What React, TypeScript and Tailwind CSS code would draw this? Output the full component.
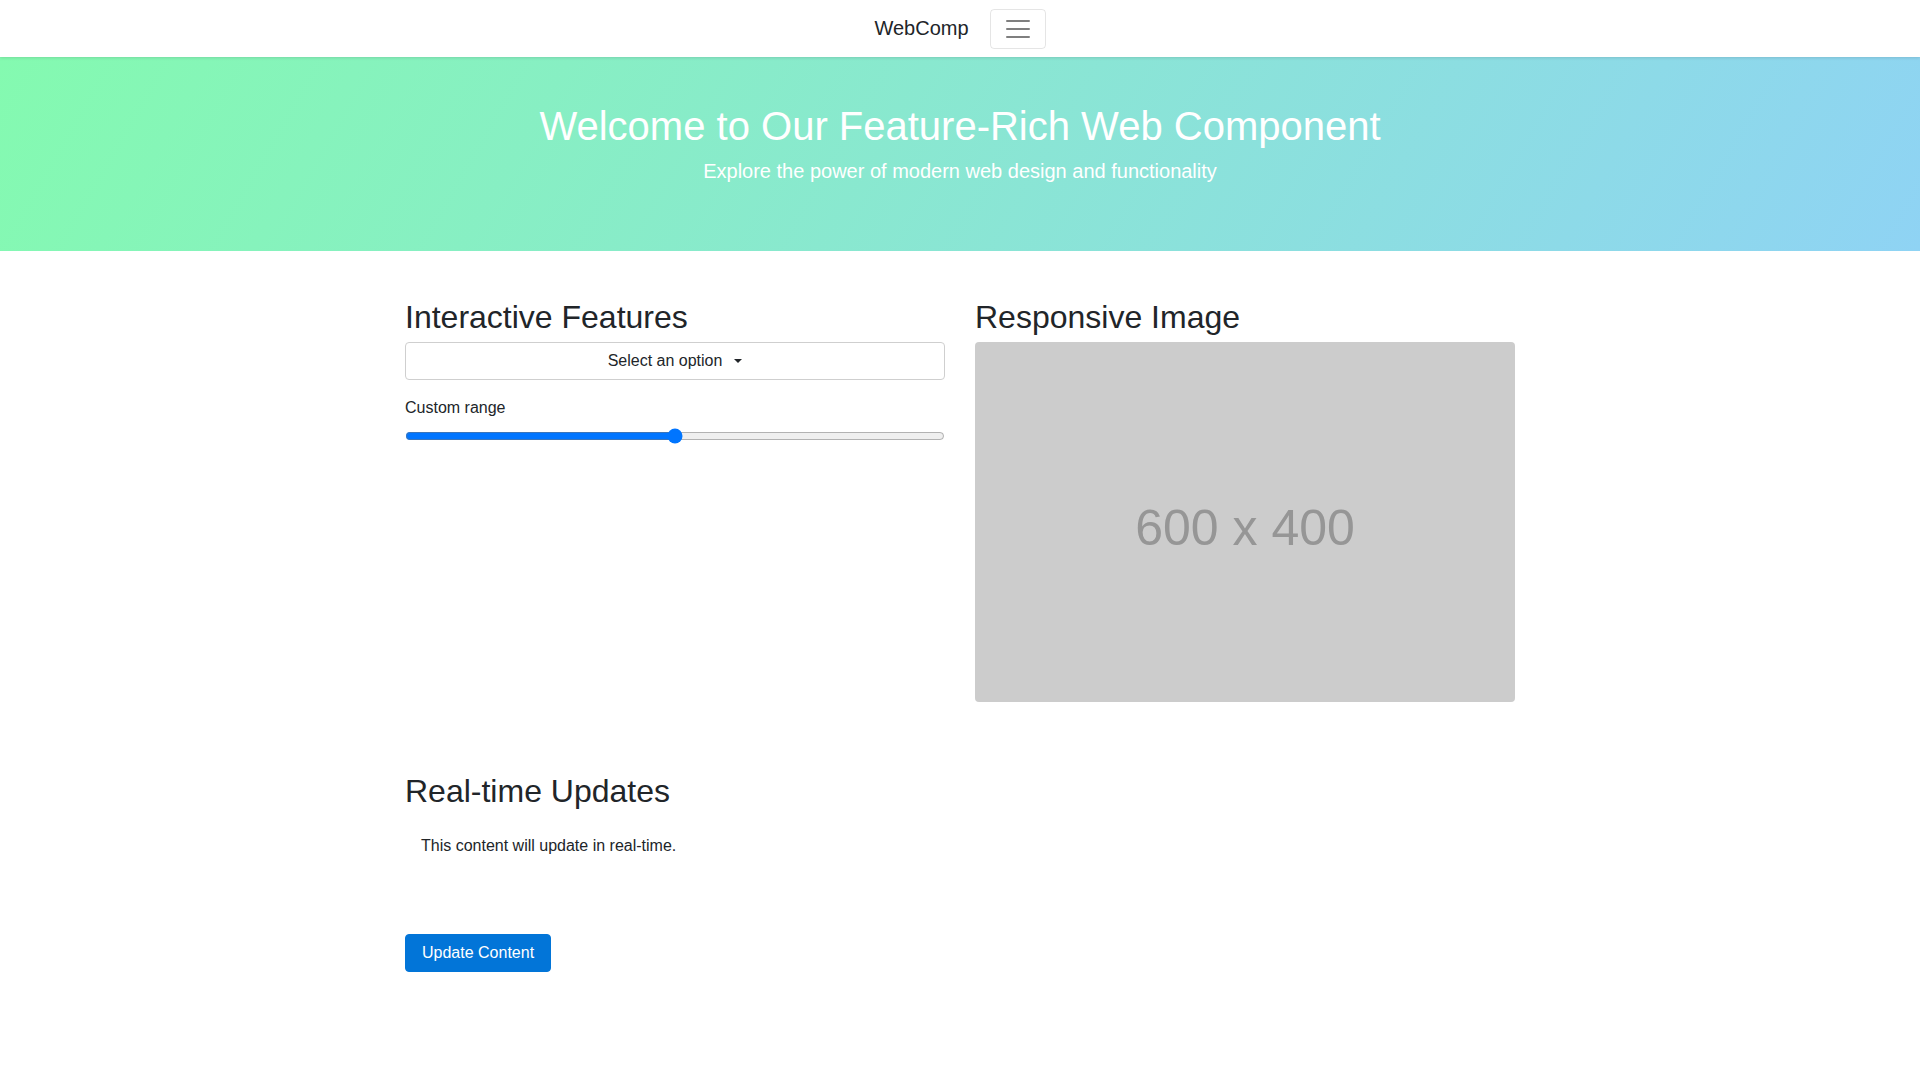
import { useState } from 'react'

const FONT = { fontFamily: '"Liberation Sans", Arial, sans-serif' }

function Navbar() {
  return (
    <nav className="relative z-10 flex h-[57px] items-center justify-center bg-white shadow-[0_1px_3px_rgba(0,0,0,0.12)]">
      <a href="#" className="mb-[2px] mr-[21px] text-[20px] leading-[30px] text-[#212529]">
        WebComp
      </a>
      <button
        type="button"
        aria-label="Toggle navigation"
        className="flex h-[40px] w-[56px] items-center justify-center rounded-[4px] border border-[rgba(0,0,0,0.1)]"
      >
        <svg width="30" height="30" viewBox="0 0 30 30">
          <path d="M4 7h22M4 15h22M4 23h22" stroke="rgba(0,0,0,0.5)" strokeWidth="2" strokeLinecap="round" />
        </svg>
      </button>
    </nav>
  )
}

function Hero() {
  return (
    <header className="bg-[linear-gradient(120deg,#84fab0_0%,#8fd3f4_100%)] pb-[49px] pt-[45px] text-center text-white">
      <h1 className="mb-[6px] text-[40px] leading-[48px]">Welcome to Our Feature-Rich Web Component</h1>
      <p className="mb-4 text-[20px] leading-[30px]">Explore the power of modern web design and functionality</p>
    </header>
  )
}

export default function App() {
  const [value, setValue] = useState(50)
  const [content, setContent] = useState('This content will update in real-time.')

  return (
    <div className="min-h-screen bg-white text-[16px] text-[#212529]" style={FONT}>
      <Navbar />
      <Hero />

      <main className="mx-auto w-[1140px] px-[15px] pt-[47px]">
        <div className="grid grid-cols-2 gap-[30px]">
          <section>
            <h2 className="mb-[6px] text-[32px] leading-[38px]">Interactive Features</h2>
            <button
              type="button"
              className="mb-4 flex h-[38px] w-full items-center justify-center rounded-[4px] border border-[#cfcfcf] bg-white text-[16px] leading-[24px] text-[#212529]"
            >
              Select an option
              <span className="ml-[12px] inline-block h-0 w-0 border-x-[4px] border-t-[4px] border-x-transparent border-t-[#212529]" />
            </button>
            <label htmlFor="range" className="mb-2 block leading-[24px]">
              Custom range
            </label>
            <input
              id="range"
              type="range"
              min={0}
              max={100}
              value={value}
              onChange={(e) => setValue(Number(e.target.value))}
              className="m-0 block h-[16px] w-full"
            />
          </section>

          <section>
            <h2 className="mb-[6px] text-[32px] leading-[38px]">Responsive Image</h2>
            <div className="flex h-[360px] w-full items-center justify-center rounded-[4px] bg-[#cccccc] pt-[12px] text-[50px] text-[#969696]">
              600 x 400
            </div>
          </section>
        </div>

        <section className="mt-[70px]">
          <h2 className="mb-2 text-[32px] leading-[38px]">Real-time Updates</h2>
          <div className="p-4">
            <p className="leading-[24px]">{content}</p>
          </div>
          <button
            type="button"
            onClick={() => setContent('Content updated at ' + new Date().toLocaleTimeString())}
            className="mt-[60px] h-[38px] rounded-[4px] border border-[#0275d8] bg-[#0275d8] px-4 text-[16px] leading-[24px] text-white"
          >
            Update Content
          </button>
        </section>
      </main>
    </div>
  )
}
